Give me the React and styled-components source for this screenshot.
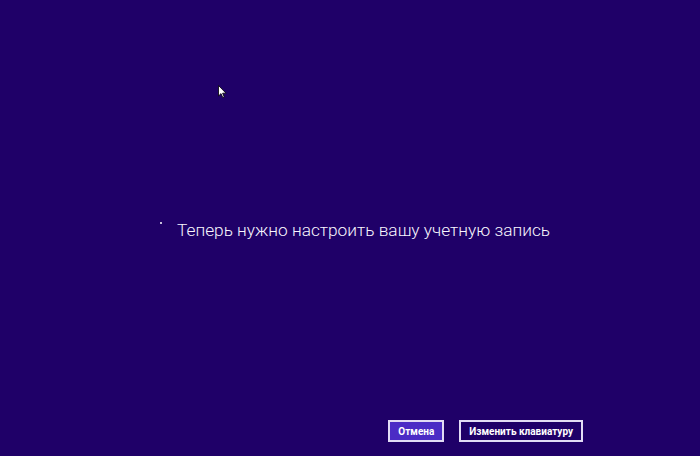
import React from "react";
import styled, { createGlobalStyle } from "styled-components";

const Global = createGlobalStyle`
  html, body { margin: 0; padding: 0; background: #1f0068; }
  #root { width: 700px; height: 456px; }
`;

const Screen = styled.div`
  position: relative;
  width: 700px;
  height: 456px;
  background: #1f0068;
  display: flex;
  flex-direction: column;
  font-family: Roboto, "Open Sans", sans-serif;
  color: #ffffff;
  overflow: hidden;
`;

const Center = styled.div`
  flex: 1;
  display: flex;
  align-items: flex-start;
  padding: 216px 0 0 160px;
  gap: 15px;
`;

const Spinner = styled.span`
  width: 2px;
  height: 2px;
  margin-top: 6px;
  background: #ffffff;
  border-radius: 1px;
`;

const Message = styled.div`
  font-size: 17.3px;
  font-weight: 300;
  line-height: 28px;
  color: #f8f6fe;
`;

const Footer = styled.div`
  display: flex;
  justify-content: flex-end;
  gap: 15px;
  padding: 0 117px 14px 0;
`;

const Button = styled.button`
  height: 22px;
  padding: 0 8px;
  border: 2px solid #e2dcf4;
  background: ${(p) => (p.$primary ? "#4b2cc5" : "#1f0068")};
  color: #ffffff;
  font-family: Roboto, "Liberation Sans", sans-serif;
  font-size: 10px;
  font-weight: 700;
  display: flex;
  align-items: center;
  cursor: default;
`;

const Cursor = styled.svg`
  position: absolute;
  left: 218px;
  top: 85px;
`;

export default function App() {
  return (
    <>
      <Global />
      <Screen>
        <Center>
          <Spinner />
          <Message>Теперь нужно настроить вашу учетную запись</Message>
        </Center>
        <Footer>
          <Button $primary>Отмена</Button>
          <Button>Изменить клавиатуру</Button>
        </Footer>
        <Cursor width="9" height="14" viewBox="0 0 9 14">
          <path d="M0.5 0.5 L0.5 11 L3 8.6 L4.8 12.6 L6.3 12 L4.6 8.2 L8 8.2 Z" fill="#ffffff" stroke="#000000" strokeWidth="0.8" />
        </Cursor>
      </Screen>
    </>
  );
}
